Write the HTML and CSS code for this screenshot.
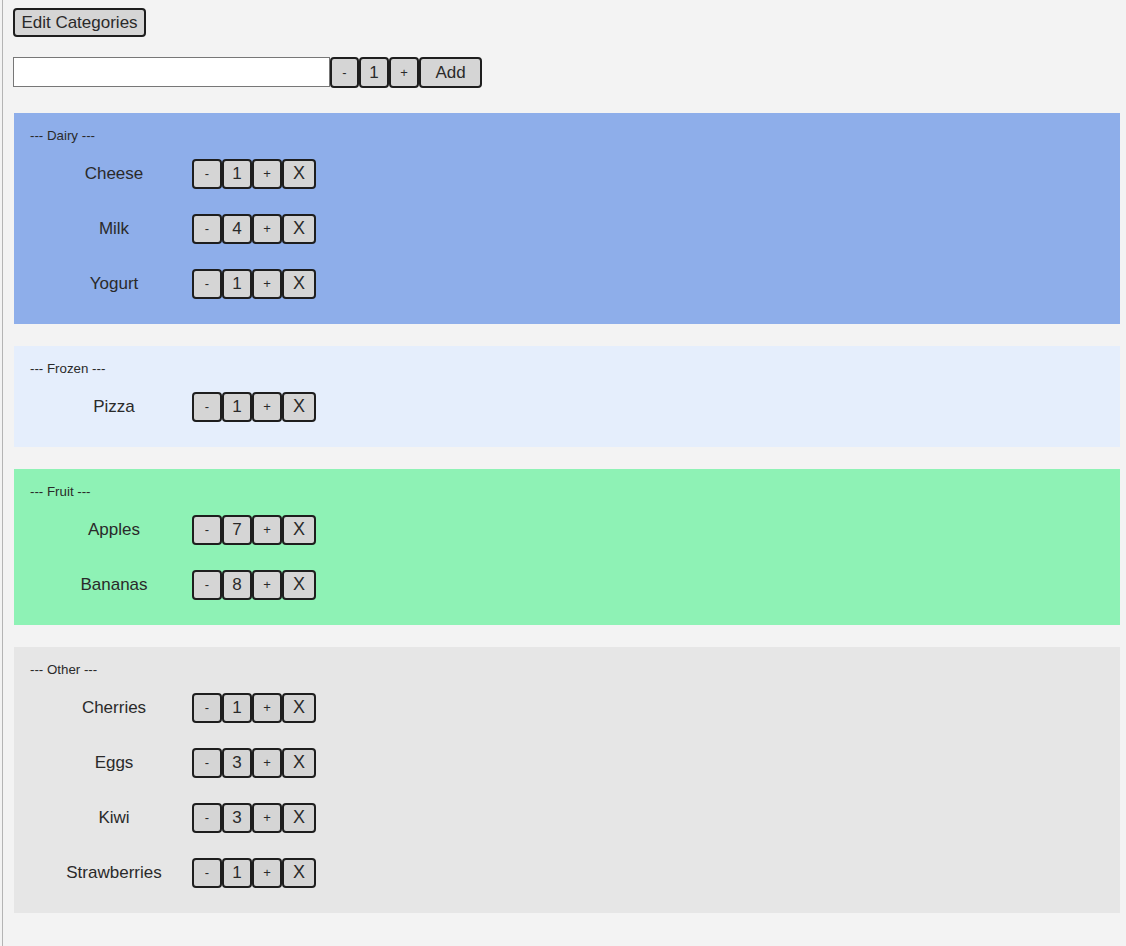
FILE: index.html
```html
<!DOCTYPE html>
<html>
<head>
<meta charset="utf-8">
<link rel="stylesheet" href="styles.css">
</head>
<body>
<div class="frame">
  <div class="top">
    <button class="btn edit">Edit Categories</button>
  </div>
  <div class="addrow">
    <input class="newitem" type="text">
    <button class="btn sm minus">-</button>
    <button class="btn sm num">1</button>
    <button class="btn sm plus">+</button>
    <button class="btn add">Add</button>
  </div>
  <div class="sections">
    <section class="cat dairy">
      <div class="label">--- Dairy ---</div>
      <div class="item"><span class="name">Cheese</span><span class="ctrls"><button class="btn c sym">-</button><button class="btn c">1</button><button class="btn c sym">+</button><button class="btn c x">X</button></span></div>
      <div class="item"><span class="name">Milk</span><span class="ctrls"><button class="btn c sym">-</button><button class="btn c">4</button><button class="btn c sym">+</button><button class="btn c x">X</button></span></div>
      <div class="item"><span class="name">Yogurt</span><span class="ctrls"><button class="btn c sym">-</button><button class="btn c">1</button><button class="btn c sym">+</button><button class="btn c x">X</button></span></div>
    </section>
    <section class="cat frozen">
      <div class="label">--- Frozen ---</div>
      <div class="item"><span class="name">Pizza</span><span class="ctrls"><button class="btn c sym">-</button><button class="btn c">1</button><button class="btn c sym">+</button><button class="btn c x">X</button></span></div>
    </section>
    <section class="cat fruit">
      <div class="label">--- Fruit ---</div>
      <div class="item"><span class="name">Apples</span><span class="ctrls"><button class="btn c sym">-</button><button class="btn c">7</button><button class="btn c sym">+</button><button class="btn c x">X</button></span></div>
      <div class="item"><span class="name">Bananas</span><span class="ctrls"><button class="btn c sym">-</button><button class="btn c">8</button><button class="btn c sym">+</button><button class="btn c x">X</button></span></div>
    </section>
    <section class="cat other">
      <div class="label">--- Other ---</div>
      <div class="item"><span class="name">Cherries</span><span class="ctrls"><button class="btn c sym">-</button><button class="btn c">1</button><button class="btn c sym">+</button><button class="btn c x">X</button></span></div>
      <div class="item"><span class="name">Eggs</span><span class="ctrls"><button class="btn c sym">-</button><button class="btn c">3</button><button class="btn c sym">+</button><button class="btn c x">X</button></span></div>
      <div class="item"><span class="name">Kiwi</span><span class="ctrls"><button class="btn c sym">-</button><button class="btn c">3</button><button class="btn c sym">+</button><button class="btn c x">X</button></span></div>
      <div class="item"><span class="name">Strawberries</span><span class="ctrls"><button class="btn c sym">-</button><button class="btn c">1</button><button class="btn c sym">+</button><button class="btn c x">X</button></span></div>
    </section>
  </div>
</div>
</body>
</html>
```
FILE: styles.css
```css
html, body {
  margin: 0;
  padding: 0;
  background: #f3f3f3;
  font-family: "Liberation Sans", Arial, sans-serif;
  color: #2a2a2a;
}
.frame {
  margin-left: 2px;
  border-left: 1px solid #b4b4b4;
  min-height: 946px;
  box-sizing: border-box;
  padding: 8px 6px 0 10px;
}
.btn {
  font-family: "Liberation Sans", Arial, sans-serif;
  font-size: 17px;
  color: #2a2a2a;
  background: #d5d5d5;
  border: 2px solid #1e1e1e;
  border-radius: 4px;
  box-sizing: border-box;
  padding: 0;
  margin: 0;
  display: inline-flex;
  align-items: center;
  justify-content: center;
}
.top {
  display: flex;
}
.edit {
  height: 29px;
  width: 133px;
}
.addrow {
  display: flex;
  margin-top: 20px;
  height: 31px;
}
.newitem {
  width: 317px;
  height: 30px;
  box-sizing: border-box;
  border: 1px solid #777;
  background: #fff;
  margin: 0;
  padding: 0 4px;
}
.addrow .btn {
  height: 31px;
}
.minus {
  width: 29px;
}
.num {
  width: 30px;
}
.plus {
  width: 30px;
}
.minus, .plus {
  font-size: 13px;
}
.add {
  width: 63px;
}
.sections {
  margin-top: 25px;
  margin-left: 1px;
  display: flex;
  flex-direction: column;
  gap: 22px;
}
.cat {
  padding: 16px 16px 13px 16px;
}
.dairy { background: #8eaeea; }
.frozen { background: #e5eefc; }
.fruit { background: #8ef2b5; }
.other { background: #e6e6e6; }
.label {
  font-size: 13.3px;
  line-height: 14px;
  height: 14px;
  margin-bottom: 3px;
}
.item {
  height: 55px;
  display: flex;
  align-items: center;
}
.name {
  width: 148px;
  margin-left: 10px;
  margin-right: 4px;
  text-align: center;
  font-size: 17px;
}
.ctrls {
  display: flex;
}
.c {
  width: 30px;
  height: 30px;
}
.c.sym {
  font-size: 13px;
}
.c.x {
  width: 34px;
  font-size: 18px;
}
```
